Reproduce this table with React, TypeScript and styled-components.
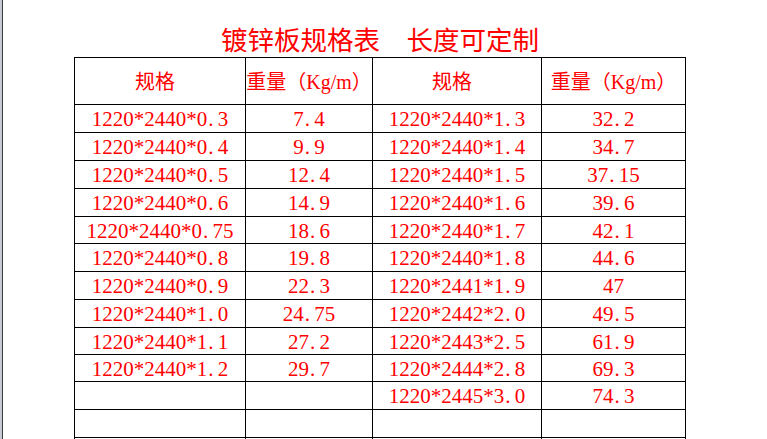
import React from "react";
import styled, { createGlobalStyle } from "styled-components";

const Global = createGlobalStyle`
  html, body { margin: 0; padding: 0; background: #fff; overflow: hidden; }
  body { height: 439px; }
`;

const Frame = styled.div`
  display: flex;
  height: 439px;
  border-left: 2px solid #c7cad3;
  overflow: hidden;
`;

const Sheet = styled.div`
  flex: 1;
  border-left: 1px solid #3a3a3a;
  padding-left: 71px;
  display: flex;
  flex-direction: column;
`;

const Block = styled.div`
  width: 612px;
  display: flex;
  flex-direction: column;
`;

const Title = styled.div`
  height: 57px;
  display: flex;
  align-items: flex-end;
  justify-content: center;
  padding-bottom: 5px;
  box-sizing: border-box;
  color: #ff0000;
  font-family: "Noto Sans CJK SC", sans-serif;
  font-size: 26.5px;
  line-height: 27px;
  white-space: pre;
`;

const Table = styled.div`
  border-top: 1px solid #000;
  border-left: 1px solid #000;
  display: flex;
  flex-direction: column;
`;

const Row = styled.div<{ $h: number }>`
  display: grid;
  grid-template-columns: 171px 127px 169px 144px;
  height: ${(p) => p.$h}px;
  border-bottom: 1px solid #000;
  box-sizing: border-box;
`;

const Cell = styled.div<{ $head?: boolean; $padRight?: number }>`
  border-right: 1px solid #000;
  display: flex;
  align-items: center;
  justify-content: center;
  white-space: nowrap;
  color: #ff0000;
  font-family: "Liberation Serif", "Noto Sans CJK SC", serif;
  font-size: ${(p) => (p.$head ? "20px" : "21px")};
  padding: ${(p) => (p.$head ? `0 ${p.$padRight ?? 10}px 2px 0` : "2px 0 0 0")};
  min-width: 0;
`;

const Dot = styled.span`
  display: inline-block;
  width: 0.5em;
  text-align: left;
  padding-left: 1px;
  box-sizing: border-box;
`;

const Star = styled.span`
  display: inline-block;
  width: 0.5em;
  text-align: center;
  vertical-align: -0.22em;
`;

const Num: React.FC<{ text: string }> = ({ text }) => (
  <>
    {text.split("").map((ch, i) =>
      ch === "." ? (
        <Dot key={i}>.</Dot>
      ) : ch === "*" ? (
        <Star key={i}>*</Star>
      ) : (
        <React.Fragment key={i}>{ch}</React.Fragment>
      )
    )}
  </>
);

const rows: [string, string, string, string][] = [
  ["1220*2440*0.3", "7.4", "1220*2440*1.3", "32.2"],
  ["1220*2440*0.4", "9.9", "1220*2440*1.4", "34.7"],
  ["1220*2440*0.5", "12.4", "1220*2440*1.5", "37.15"],
  ["1220*2440*0.6", "14.9", "1220*2440*1.6", "39.6"],
  ["1220*2440*0.75", "18.6", "1220*2440*1.7", "42.1"],
  ["1220*2440*0.8", "19.8", "1220*2440*1.8", "44.6"],
  ["1220*2440*0.9", "22.3", "1220*2441*1.9", "47"],
  ["1220*2440*1.0", "24.75", "1220*2442*2.0", "49.5"],
  ["1220*2440*1.1", "27.2", "1220*2443*2.5", "61.9"],
  ["1220*2440*1.2", "29.7", "1220*2444*2.8", "69.3"],
  ["", "", "1220*2445*3.0", "74.3"],
  ["", "", "", ""],
  ["", "", "", ""],
];

const heights = [28, 28, 28, 28, 27, 28, 28, 28, 27, 27, 28, 28, 28];

export default function App() {
  return (
    <>
      <Global />
      <Frame>
        <Sheet>
          <Block>
            <Title>镀锌板规格表　长度可定制</Title>
            <Table>
              <Row $h={47}>
                <Cell $head>规格</Cell>
                <Cell $head $padRight={0}>重量（Kg/m）</Cell>
                <Cell $head>规格</Cell>
                <Cell $head $padRight={0}>重量（Kg/m）</Cell>
              </Row>
              {rows.map((r, i) => (
                <Row key={i} $h={heights[i]}>
                  {r.map((c, j) => (
                    <Cell key={j}>
                      <Num text={c} />
                    </Cell>
                  ))}
                </Row>
              ))}
            </Table>
          </Block>
        </Sheet>
      </Frame>
    </>
  );
}
